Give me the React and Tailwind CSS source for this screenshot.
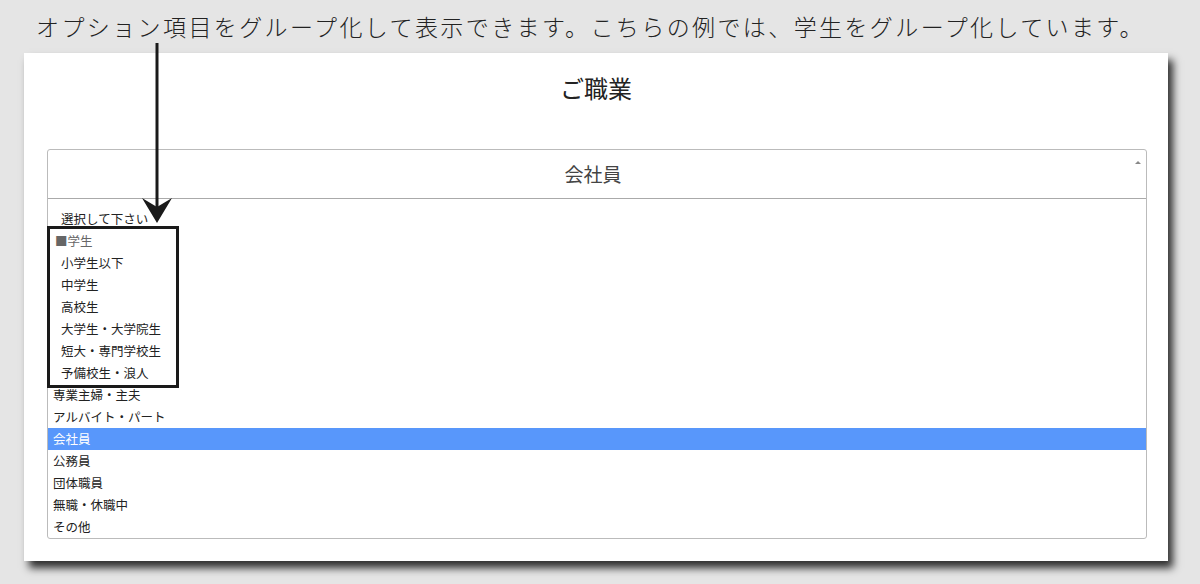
export default function App() {
  const rows = [
    { t: "選択して下さい", indent: true },
    { t: "■学生", group: true },
    { t: "小学生以下", indent: true },
    { t: "中学生", indent: true },
    { t: "高校生", indent: true },
    { t: "大学生・大学院生", indent: true },
    { t: "短大・専門学校生", indent: true },
    { t: "予備校生・浪人", indent: true },
    { t: "専業主婦・主夫" },
    { t: "アルバイト・パート" },
    { t: "会社員", sel: true },
    { t: "公務員" },
    { t: "団体職員" },
    { t: "無職・休職中" },
    { t: "その他" },
  ];
  return (
    <div className="relative w-[1200px] h-[584px] overflow-hidden bg-[#e5e5e5] font-['Noto_Sans_CJK_JP',sans-serif]">
      <p className="h-[53px] pl-[36px] pt-[9px] text-[23px] leading-[34px] tracking-[2.4px] text-[#222] font-light whitespace-nowrap">
        オプション項目をグループ化して表示できます。こちらの例では、学生をグループ化しています。
      </p>
      <div className="ml-[24px] w-[1144px] h-[508px] bg-white shadow-[5px_7px_8px_rgba(0,0,0,0.8)]">
        <h2 className="h-[96px] pt-[19px] text-center text-[24px] leading-[32px] text-[#222]">ご職業</h2>
        <div className="ml-[23px] mr-[21px] border border-[#bbb] rounded-[3px]">
          <div className="relative h-[49px] border-b border-[#aaa] flex items-center justify-center pr-[8px] text-[19px] text-[#444]">
            会社員
            <span className="absolute right-[5px] top-[11px] w-0 h-0 border-l-[3px] border-r-[3px] border-b-[3px] border-l-transparent border-r-transparent border-b-[#888]"></span>
          </div>
          <ul className="pt-[9px] text-[12.5px] leading-[22px]">
            {rows.map((r, i) => (
              <li
                key={i}
                className={
                  "h-[22px] whitespace-nowrap " +
                  (r.sel
                    ? "bg-[#5897fb] text-white pl-[5px]"
                    : r.group
                    ? "text-[#666] pl-[7px]"
                    : r.indent
                    ? "text-[#222] pl-[13px]"
                    : "text-[#222] pl-[5px]")
                }
              >
                {r.t}
              </li>
            ))}
          </ul>
        </div>
      </div>
      <div className="absolute left-[47px] top-[226px] w-[132px] h-[162px] border-[3px] border-[#1a1a1a]"></div>
      <svg className="absolute left-[140px] top-[40px]" width="36" height="190" viewBox="0 0 36 190">
        <line x1="17" y1="3" x2="17" y2="168" stroke="#1a1a1a" strokeWidth="3" />
        <polygon points="17,183 2,158 17,167 32,158" fill="#1a1a1a" />
      </svg>
    </div>
  );
}
